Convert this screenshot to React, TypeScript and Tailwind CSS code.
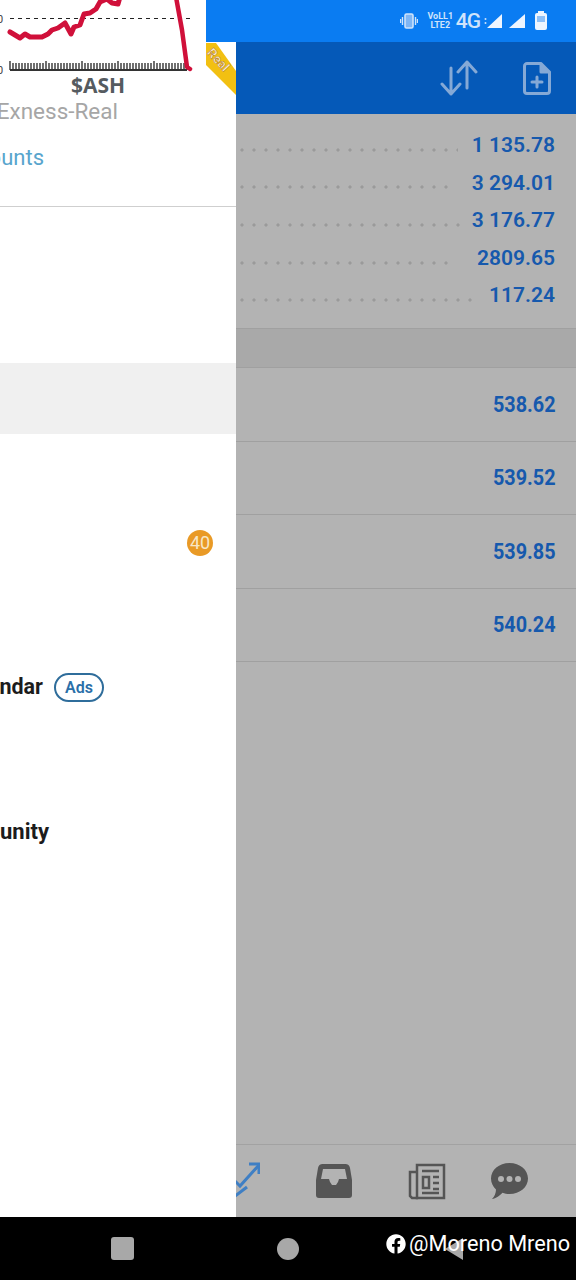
import { FaFacebook } from 'react-icons/fa';

const summary = [
  { value: '1 135.78', dots: 'w-[222px]' },
  { value: '3 294.01', dots: 'w-[216px]' },
  { value: '3 176.77', dots: 'w-[224px]' },
  { value: '2809.65', dots: 'w-[216px]' },
  { value: '117.24', dots: 'w-[236px]' },
];

const quotes = ['538.62', '539.52', '539.85', '540.24'];

function Chart() {
  const ticks = Array.from({ length: 60 }, (_, i) => 10 + i * 3);
  return (
    <svg width="206" height="74" viewBox="0 0 206 74" className="block">
      <text x="-3" y="23" fontSize="11" fill="#444" fontFamily="Roboto, sans-serif">0</text>
      <text x="-3" y="74" fontSize="11" fill="#444" fontFamily="Roboto, sans-serif">0</text>
      <line x1="10" y1="18.5" x2="190" y2="18.5" stroke="#222" strokeWidth="1" strokeDasharray="4 4" />
      <line x1="10" y1="70" x2="187" y2="70" stroke="#333" strokeWidth="2" />
      {ticks.map((x, i) => (
        <line key={x} x1={x} y1={i % 12 === 0 ? 61 : 63} x2={x} y2="70" stroke="#333" strokeWidth="1.4" />
      ))}
      <polyline
        points="10,32 15,35 20,38 25,34 30,37 42,37 48,34 52,30 58,28 65,23 71,34 74,27 80,25 84,14 90,13 96,9 100,2 107,-1 112,3 118,4 120,-3"
        fill="none"
        stroke="#d0103a"
        strokeWidth="5"
        strokeLinejoin="round"
        strokeLinecap="round"
      />
      <polyline points="176,-3 182,30 187,67 190,69" fill="none" stroke="#d0103a" strokeWidth="4.500" strokeLinejoin="round" strokeLinecap="round" />
    </svg>
  );
}

function Ribbon() {
  return (
    <svg width="30" height="54" viewBox="0 0 30 54" className="block">
      <polygon points="0,1 10,1 30,29 30,53 0,23" fill="#f2c012" />
      <text
        x="12"
        y="22"
        fontSize="13"
        fontWeight="700"
        fill="#fdf0cf"
        stroke="#a5671a"
        strokeWidth="0.4"
        fontFamily="Roboto, sans-serif"
        textAnchor="middle"
        transform="rotate(47 12 18)"
      >
        Real
      </text>
    </svg>
  );
}

function Drawer() {
  return (
    <aside className="w-[236px] shrink-0 overflow-hidden bg-white">
      <div className="flex h-[207px] border-b border-[#cfcfcf]">
        <div className="w-[206px] shrink-0">
          <Chart />
          <p className="w-[196px] -mt-[1px] text-center font-['Open_Sans'] text-[21px] leading-[24px] font-bold text-[#555b60]">$ASH</p>
          <div className="mt-[1px] flex w-[118px] justify-end whitespace-nowrap text-[22.500px] leading-[26px] text-[#a6a6a6]">Exness-Real</div>
          <div className="mt-[21px] flex w-[44px] justify-end whitespace-nowrap text-[22px] leading-[26px] text-[#58a5cd]">Accounts</div>
        </div>
        <div className="w-[30px] shrink-0">
          <div className="h-[42px] bg-[#0a7cf2]" />
          <Ribbon />
        </div>
      </div>
      <div className="h-[156px]" />
      <div className="h-[71px] bg-[#f0f0f0]" />
      <div className="h-[73px]" />
      <div className="flex h-[73px] items-center justify-end pr-[23px]">
        <span className="-mt-[2px] flex h-[26px] w-[26px] items-center justify-center rounded-full bg-[#e99a26] text-[18px] text-[#f8e7c6]">40</span>
      </div>
      <div className="h-[71px]" />
      <div className="flex h-[73px] items-center">
        <div className="flex w-[43px] shrink-0 justify-end whitespace-nowrap text-[21.500px] font-bold text-[#1c1c1c]">Calendar</div>
        <span className="ml-[11px] flex h-[29px] w-[50px] items-center justify-center rounded-full border-2 border-[#2f6d9b] text-[16px] font-semibold text-[#2a6fa8]">Ads</span>
      </div>
      <div className="h-[72px]" />
      <div className="flex h-[71px] items-center">
        <div className="flex w-[49px] shrink-0 justify-end whitespace-nowrap text-[22px] font-bold text-[#1c1c1c]">Community</div>
      </div>
    </aside>
  );
}

function StatusBar() {
  return (
    <div className="flex h-[42px] items-center justify-end bg-[#0a7cf2] pr-[28px] text-[#cfe3fb]">
      <svg width="18" height="16" viewBox="0 0 18 16" fill="none" className="mr-[12px]">
        <rect x="5" y="1" width="8" height="14" rx="1.5" stroke="currentColor" strokeWidth="1.6" fill="#7fb6f5" />
        <path d="M2.500 4v8M0.500 6v4M15.500 4v8M17.500 6v4" stroke="currentColor" strokeWidth="1.4" />
      </svg>
      <div className="mr-[5px] flex w-[21px] flex-col items-center font-['Roboto'] text-[9px] leading-[9px] font-bold">
        <span>VoLL1</span>
        <span>LTE2</span>
      </div>
      <span className="mr-[4px] font-['Roboto'] text-[21px] leading-none font-medium tracking-[-1px]">4G</span>
      <svg width="19" height="16" viewBox="0 0 19 16" className="mr-[5px]">
        <circle cx="1.500" cy="6" r="1" fill="currentColor" />
        <circle cx="1.500" cy="10" r="1" fill="currentColor" />
        <polygon points="18,1 18,15 3,15" fill="#eef5ff" />
      </svg>
      <svg width="18" height="16" viewBox="0 0 18 16" className="mr-[8px]">
        <polygon points="17,1 17,15 1,15" fill="#eef5ff" />
      </svg>
      <svg width="14" height="20" viewBox="0 0 14 20">
        <rect x="4" y="0" width="6" height="3" fill="#eef5ff" />
        <rect x="1" y="2" width="12" height="17" rx="2" fill="#eef5ff" />
        <rect x="3" y="5" width="8" height="6" fill="#8fc0f7" />
      </svg>
    </div>
  );
}

function Header() {
  return (
    <div className="flex h-[72px] items-center justify-end gap-[45px] bg-[#0559b8] pr-[25px] text-[#85a9d6]">
      <svg width="38" height="36" viewBox="0 0 38 36" fill="none" stroke="currentColor" strokeWidth="3" strokeLinecap="round" strokeLinejoin="round">
        <path d="M11 8v26M2 24l9 10 9-10" />
        <path d="M27 28V2M18 12l9-10 9 10" />
      </svg>
      <svg width="28" height="33" viewBox="0 0 28 33" fill="none" stroke="currentColor" strokeWidth="3" strokeLinejoin="round" strokeLinecap="round">
        <path d="M4 1.500h14l8.500 8.500v19a2.500 2.500 0 0 1-2.500 2.500H4A2.500 2.500 0 0 1 1.500 29V4A2.500 2.500 0 0 1 4 1.500z" />
        <path d="M18 2v8h8" fill="currentColor" />
        <path d="M14 15v10M9 20h10" />
      </svg>
    </div>
  );
}

function BottomTabs() {
  return (
    <div className="mt-auto flex h-[73px] items-center border-t border-[#a2a2a2] text-[#555555]">
      <svg width="24" height="36" viewBox="0 0 24 36" fill="none" stroke="#3f7fc4" strokeWidth="3" className="-mt-[2px] shrink-0">
        <path d="M-2 18l6 6L23 3" />
        <path d="M13 2h10v10" />
        <path d="M-2 35l13-10" />
      </svg>
      <svg width="36" height="34" viewBox="0 0 36 34" className="ml-[56px] shrink-0">
        <path
          fill="currentColor"
          fillRule="evenodd"
          d="M7 0h22a5 5 0 0 1 5 4l2 12v15a3 3 0 0 1-3 3H3a3 3 0 0 1-3-3V16L2 4a5 5 0 0 1 5-4zM7 5L5 15h8l1 3 2 3h4l2-3 1-3h8L29 5z"
        />
      </svg>
      <svg width="38" height="37" viewBox="0 0 38 37" fill="none" stroke="currentColor" strokeWidth="2.500" className="ml-[56px] shrink-0">
        <path d="M9 2h27v33H9z" />
        <path d="M9 9H2v24l2 2h6" />
        <path d="M14 8h17" />
        <path d="M15 14h6v11h-6z" />
        <path d="M25 14h6M25 20h6M25 26h6M14 30h17" />
      </svg>
      <svg width="37" height="36" viewBox="0 0 37 36" className="ml-[45px] shrink-0">
        <path fill="currentColor" d="M18.500 0C29 0 37 7 37 15.500S29 31 18.500 31c-2.500 0-5-.4-7-1.200C9 32.500 5 35.500 1 36c2.500-2.500 4-6 4-9.500C2 23.500 0 20 0 15.500 0 7 8 0 18.500 0z" />
        <circle cx="10" cy="16" r="3" fill="#b3b3b3" />
        <circle cx="18.500" cy="16" r="3" fill="#b3b3b3" />
        <circle cx="27" cy="16" r="3" fill="#b3b3b3" />
      </svg>
    </div>
  );
}

function NavBar() {
  return (
    <div className="relative flex h-[63px] items-center bg-black">
      <div className="ml-[111px] h-[23px] w-[23px] rounded-[3px] bg-[#a8a8a8]" />
      <div className="ml-[143px] h-[22px] w-[22px] rounded-full bg-[#a8a8a8]" />
      <svg width="20" height="24" viewBox="0 0 20 24" className="ml-[145px]">
        <polygon points="19,1 19,23 1,12" fill="#a8a8a8" />
      </svg>
      <div className="absolute top-[14px] left-[386px] flex items-center gap-[3px] font-['Roboto'] text-[21.700px] leading-[26px] text-white">
        <FaFacebook className="text-[20px]" />
        <span>@Moreno Mreno</span>
      </div>
    </div>
  );
}

export default function App() {
  return (
    <div className="flex h-[1280px] w-[576px] flex-col overflow-hidden bg-black font-['Roboto',sans-serif]">
      <div className="flex h-[1217px]">
        <Drawer />
        <main className="flex min-w-0 flex-1 flex-col bg-[#b3b3b3]">
          <StatusBar />
          <Header />
          <div className="flex h-[214px] flex-col pt-[13px]">
            {summary.map((row) => (
              <div key={row.value} className="flex h-[37.600px] items-center justify-between pr-[21px]">
                <div className={`mt-[8px] h-[4px] ${row.dots} bg-[radial-gradient(circle,#9a9a9a_1.2px,transparent_2px)] bg-[length:12px_4px]`} />
                <span className="text-[21px] font-semibold text-[#1659ad]">{row.value}</span>
              </div>
            ))}
          </div>
          <div className="h-[40px] border-y border-[#a0a0a0] bg-[#a9a9a9]" />
          {quotes.map((price) => (
            <div key={price} className="flex h-[73.500px] shrink-0 items-center justify-end border-b border-[#a0a0a0] pr-[21px]">
              <span className="origin-right scale-x-[0.9] text-[22px] font-bold text-[#1659ad]">{price}</span>
            </div>
          ))}
          <BottomTabs />
        </main>
      </div>
      <NavBar />
    </div>
  );
}
